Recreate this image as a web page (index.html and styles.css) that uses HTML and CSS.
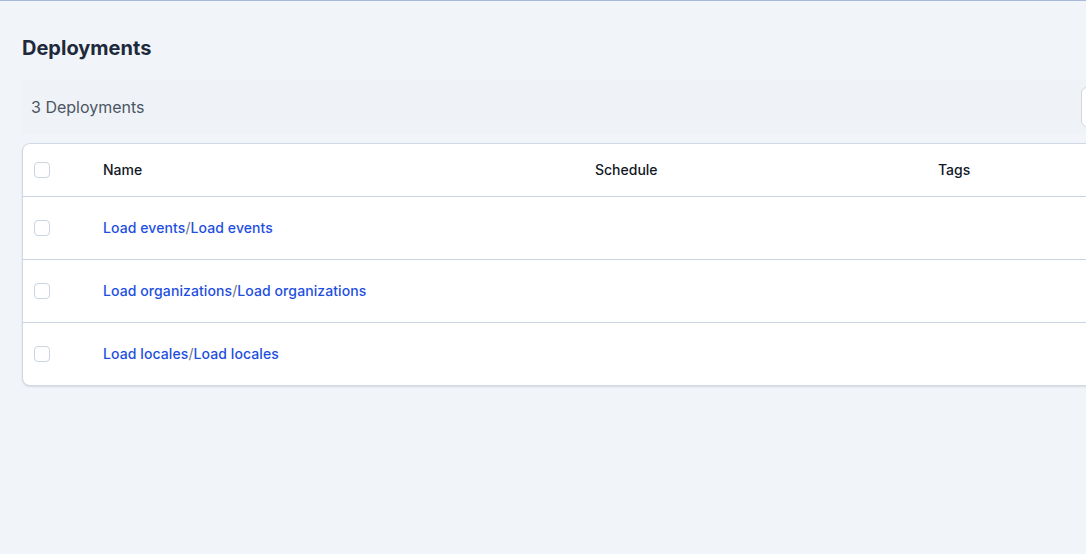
FILE: index.html
```html
<!DOCTYPE html>
<html lang="en">
<head>
<meta charset="utf-8">
<title>Deployments</title>
<link rel="stylesheet" href="styles.css">
</head>
<body>
<div class="topline"></div>
<main class="page">
  <h1 class="title">Deployments</h1>
  <div class="toolbar">
    <div class="count">3 Deployments</div>
    <div class="search"></div>
  </div>
  <div class="card">
    <div class="row head">
      <div class="cell check"><span class="box"></span></div>
      <div class="cell">Name</div>
      <div class="cell">Schedule</div>
      <div class="cell">Tags</div>
      <div class="cell"></div>
    </div>
    <div class="row">
      <div class="cell check"><span class="box"></span></div>
      <div class="cell name"><a href="#">Load events</a><span class="sep">/</span><a href="#">Load events</a></div>
      <div class="cell"></div>
      <div class="cell"></div>
      <div class="cell"></div>
    </div>
    <div class="row">
      <div class="cell check"><span class="box"></span></div>
      <div class="cell name"><a href="#">Load organizations</a><span class="sep">/</span><a href="#">Load organizations</a></div>
      <div class="cell"></div>
      <div class="cell"></div>
      <div class="cell"></div>
    </div>
    <div class="row last">
      <div class="cell check"><span class="box"></span></div>
      <div class="cell name"><a href="#">Load locales</a><span class="sep">/</span><a href="#">Load locales</a></div>
      <div class="cell"></div>
      <div class="cell"></div>
      <div class="cell"></div>
    </div>
  </div>
</main>
</body>
</html>
```

FILE: styles.css
```css
html, body {
  margin: 0;
  padding: 0;
  background: #f1f5f9;
  overflow: hidden;
  height: 100%;
}
body {
  font-family: Inter, "Noto Sans", sans-serif;
  color: #111827;
}
.topline {
  height: 1px;
  background: #a9b8df;
}
.page {
  width: 1307px;
  padding: 33px 0 0 22px;
}
.title {
  margin: 0;
  font-size: 20px;
  line-height: 28px;
  font-weight: 700;
  color: #1e293b;
}
.toolbar {
  margin-top: 18px;
  height: 54px;
  padding: 0 8px 0 9px;
  background: #eff3f7;
  display: flex;
  align-items: center;
}
.count {
  flex: 1;
  font-size: 16px;
  color: #4b5563;
}
.search {
  width: 238px;
  height: 38px;
  background: #fff;
  border: 1px solid #d1d5db;
  border-radius: 6px;
}
.card {
  margin-top: 9px;
  background: #fff;
  border: 1px solid #d1d9e4;
  border-radius: 8px;
  box-shadow: 0 1px 2px rgba(15, 23, 42, 0.12);
}
.row {
  display: grid;
  grid-template-columns: 80px 492px 343px 200px 1fr;
  height: 62px;
  border-bottom: 1px solid #cbd5e1;
  align-items: center;
}
.row.head {
  height: 52px;
}
.row.last {
  border-bottom: none;
}
.cell {
  font-size: 14px;
  line-height: 20px;
}
.head .cell {
  font-weight: 500;
  color: #111827;
}
.check {
  padding-left: 11px;
  display: flex;
  align-items: center;
}
.box {
  width: 14px;
  height: 14px;
  border: 1px solid #cbd5e1;
  border-radius: 4px;
  background: #fff;
}
.name {
  letter-spacing: 0.09px;
}
.name a {
  color: #1e4fe0;
  font-weight: 500;
  text-decoration: none;
}
.name .sep {
  color: #6b7280;
}
```
